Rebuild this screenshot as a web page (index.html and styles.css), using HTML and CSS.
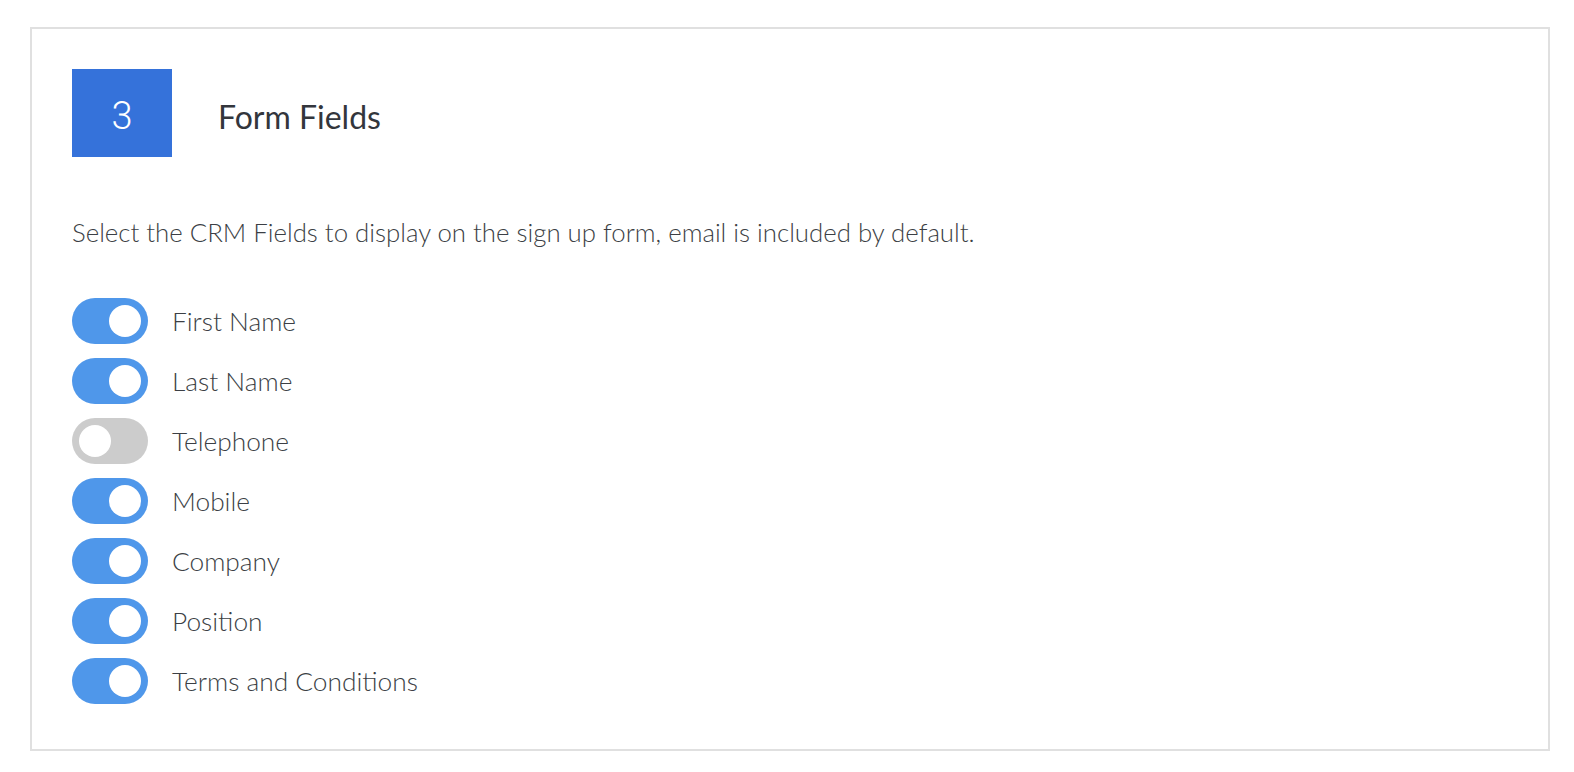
FILE: index.html
```html
<!DOCTYPE html>
<html>
<head>
<meta charset="utf-8">
<link rel="stylesheet" href="styles.css">
</head>
<body>
<div class="page">
  <section class="card">
    <header class="card-head">
      <div class="step">3</div>
      <h2 class="title">Form Fields</h2>
    </header>
    <p class="desc">Select the CRM Fields to display on the sign up form, email is included by default.</p>
    <ul class="fields">
      <li class="field"><span class="toggle on"><span class="knob"></span></span><span class="label">First Name</span></li>
      <li class="field"><span class="toggle on"><span class="knob"></span></span><span class="label">Last Name</span></li>
      <li class="field"><span class="toggle"><span class="knob"></span></span><span class="label">Telephone</span></li>
      <li class="field"><span class="toggle on"><span class="knob"></span></span><span class="label">Mobile</span></li>
      <li class="field"><span class="toggle on"><span class="knob"></span></span><span class="label">Company</span></li>
      <li class="field"><span class="toggle on"><span class="knob"></span></span><span class="label">Position</span></li>
      <li class="field"><span class="toggle on"><span class="knob"></span></span><span class="label">Terms and Conditions</span></li>
    </ul>
  </section>
</div>
</body>
</html>
```
FILE: styles.css
```css
html, body {
  margin: 0;
  padding: 0;
  background: #ffffff;
}
body {
  font-family: Lato, "Noto Sans", sans-serif;
  color: #3b3e44;
}
.page {
  padding: 27px 24px 21px 30px;
}
.card {
  width: 1520px;
  height: 724px;
  box-sizing: border-box;
  border: 2px solid #e0e0e0;
  padding: 40px 40px;
}
.card-head {
  display: flex;
  align-items: center;
  gap: 46px;
}
.step {
  width: 100px;
  height: 88px;
  background: #3572da;
  color: #ffffff;
  font-family: Roboto, sans-serif;
  font-weight: 300;
  font-size: 38px;
  line-height: 1;
  padding-top: 5px;
  box-sizing: border-box;
  display: flex;
  align-items: center;
  justify-content: center;
}
.title {
  margin: 0;
  padding-top: 6px;
  font-weight: 400;
  font-size: 32px;
  color: #33363c;
}
.desc {
  margin: 60px 0 0 0;
  font-weight: 300;
  font-size: 25.8px;
  line-height: 30px;
  color: #3c3f45;
}
.fields {
  list-style: none;
  margin: 51px 0 0 0;
  padding: 0;
  display: flex;
  flex-direction: column;
  gap: 14px;
}
.field {
  display: flex;
  align-items: center;
  gap: 24px;
  height: 46px;
}
.toggle {
  width: 76px;
  height: 46px;
  border-radius: 23px;
  background: #cccccc;
  box-sizing: border-box;
  padding: 7px;
  display: flex;
  justify-content: flex-start;
}
.toggle.on {
  background: #4f97ea;
  justify-content: flex-end;
}
.knob {
  width: 32px;
  height: 32px;
  border-radius: 50%;
  background: #ffffff;
}
.label {
  font-weight: 300;
  font-size: 26.3px;
  color: #3c3f45;
}
```
